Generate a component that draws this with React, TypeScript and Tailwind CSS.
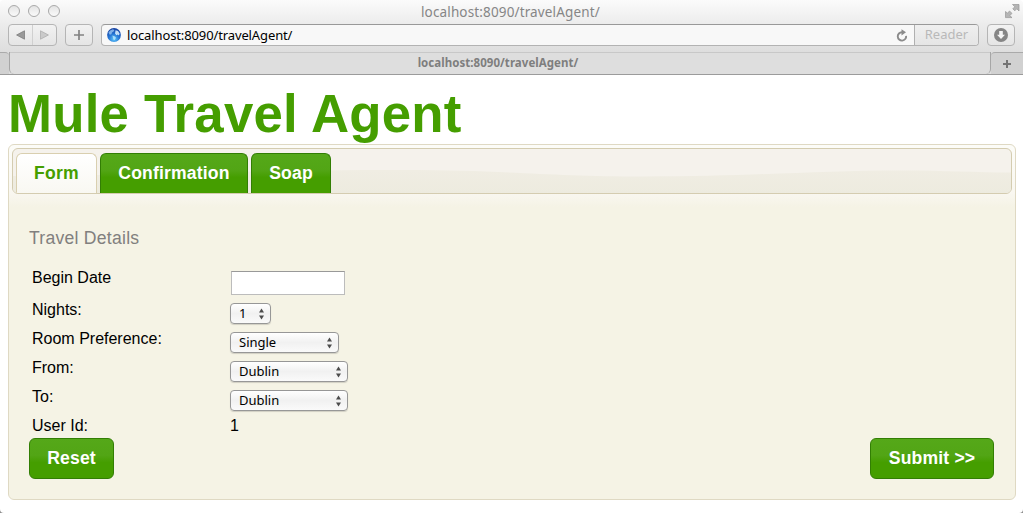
import React from "react";

function Steppers() {
  return (
    <svg width="7" height="12" viewBox="0 0 7 12" className="shrink-0" fill="#4b4b4b">
      <path d="M3.5 0.5 L6 4.5 H1 Z M3.5 11.5 L6 7.5 H1 Z" />
    </svg>
  );
}

function Select({ value, size }: { value: string; size: string }) {
  return (
    <button
      className={`flex h-[21px] items-center justify-between rounded-[4px] border border-[#979797] bg-linear-to-b from-white via-[#f1f1f1] to-[#fafafa] pr-[5px] pl-2 font-['Noto_Sans'] text-[13px] leading-[19px] text-black shadow-[0_1px_1px_rgba(0,0,0,0.15)] ${size}`}
    >
      <span>{value}</span>
      <Steppers />
    </button>
  );
}

function Row({ label, height, children }: { label: string; height: string; children: React.ReactNode }) {
  return (
    <div className={`flex items-start ${height}`}>
      <span className="w-[198px] shrink-0 text-[16px] leading-[18px]">{label}</span>
      {children}
    </div>
  );
}

const green =
  "border-[#327e04] bg-[linear-gradient(to_bottom,#55a819_0%,#52a515_42%,#459e00_60%,#459e00_100%)] font-bold text-[17.6px] tracking-[0.16px] text-white";

const chromeButton =
  "flex h-[22px] items-center rounded-[4px] border border-[#b5b5b5] bg-linear-to-b from-[#f2f2f2] to-[#e5e5e5]";

function Light() {
  return <span className="size-3 rounded-full border border-[#a9a9a9] bg-linear-to-b from-[#e4e4e4] to-[#fafafa]" />;
}

function Browser() {
  return (
    <header className="flex h-[75px] flex-col overflow-hidden rounded-t-[4px] border-b border-[#9b9b9b] bg-[linear-gradient(to_bottom,#fbfbfb_0px,#ececec_24px,#dedede_52px,#dedede_75px)] font-['Noto_Sans']">
      <div className="flex h-6 shrink-0 items-center pl-2">
        <div className="flex w-[200px] gap-2 pb-[2px]">
          <Light />
          <Light />
          <Light />
        </div>
        <div className="flex-1 pl-[213px] text-[13.5px] leading-[22px] whitespace-nowrap text-[#868686]">
          <span className="tracking-[0.14px]">localhost:8090/travelAgent/</span>
        </div>
        <svg width="16" height="16" viewBox="0 0 16 16" className="mr-[3px] mb-[2px]" fill="#b5b5b5" stroke="#969696" strokeWidth="0.7">
          <path d="M8.5 1.5 H15 V8 L12.8 5.8 L10.8 7.8 L8.8 5.8 L10.8 3.8 Z M1.5 8.5 L3.5 10.2 L5.5 8 L8 10.4 L5.8 12.6 L8 14.6 H1.5 Z" />
        </svg>
      </div>
      <div className="flex h-7 shrink-0 items-start pr-2 pl-2">
        <div className={`${chromeButton} w-[49px]`}>
          <span className="flex h-full w-[24px] items-center justify-center border-r border-[#d0d0d0]">
            <svg width="9" height="10" viewBox="0 0 9 10" fill="#999999" stroke="#7d7d7d" strokeWidth="0.8"><path d="M0.6 5 L8.5 0.8 V9.2 Z" /></svg>
          </span>
          <span className="flex flex-1 items-center justify-center">
            <svg width="9" height="10" viewBox="0 0 9 10" fill="#cacaca" stroke="#adadad" strokeWidth="0.8"><path d="M8.4 5 L0.5 0.8 V9.2 Z" /></svg>
          </span>
        </div>
        <div className={`${chromeButton} ml-2 w-7 justify-center`}>
          <svg width="10" height="10" viewBox="0 0 10 10" fill="none" stroke="#838383" strokeWidth="1.7"><path d="M0 5 H10 M5 0 V10" /></svg>
        </div>
        <div className="ml-2 flex h-[22px] flex-1 rounded-[4px] border border-[#b3b3b3] border-t-[#999] bg-[#f8f8f8]">
          <div className="flex flex-1 items-center pr-[6px] pl-[5px]">
            <svg width="14" height="14" viewBox="0 0 14 14">
              <defs>
                <radialGradient id="globe" cx="50%" cy="80%" r="80%">
                  <stop offset="0" stopColor="#5fc6fb" />
                  <stop offset="0.5" stopColor="#2272d2" />
                  <stop offset="1" stopColor="#173f9e" />
                </radialGradient>
              </defs>
              <circle cx="7" cy="7" r="6.9" fill="url(#globe)" />
              <path d="M1.4 4.6 Q2.8 1.8 5.8 1.2 L7.4 2 L6.6 3.6 L5 4.6 L4.4 6.2 L2.8 6.8 Z" fill="#a9d4fb" opacity="0.7" />
              <path d="M8.6 2.2 L11 3 L12.6 5.4 L12 7.4 L10.6 6.6 L9.4 7.2 L8 5.4 Z" fill="#e0f5ff" opacity="0.85" />
              <path d="M5.4 7.6 L8 8.4 L9 9.8 L7.6 12 L6.4 11.6 Z" fill="#c7efff" opacity="0.75" />
            </svg>
            <span className="ml-[6px] flex-1 text-[13px] leading-5 tracking-[-0.12px] text-black">localhost:8090/travelAgent/</span>
            <svg width="12" height="13" viewBox="0 0 12 13" fill="none" stroke="#8b8b8b" strokeWidth="1.9">
              <path d="M10.1 6.8 A4.2 4.2 0 1 1 6 3.2" />
              <path d="M5.5 0.2 L10 3.3 L5.5 6.4 Z" fill="#8b8b8b" stroke="none" />
            </svg>
          </div>
          <div className="flex w-16 items-center justify-center rounded-r-[3px] border-l border-[#b0b0b0] bg-linear-to-b from-[#efefef] to-[#e5e5e5] text-[13px] text-[#b9b9b9]">
            Reader
          </div>
        </div>
        <div className={`${chromeButton} ml-2 w-7 justify-center`}>
          <svg width="14" height="14" viewBox="0 0 14 14">
            <circle cx="7" cy="7" r="7" fill="#858585" />
            <path d="M5.2 3 H8.8 V6.8 H11 L7 11 L3 6.8 H5.2 Z" fill="#f4f4f4" />
          </svg>
        </div>
      </div>
      <div className="flex h-[22px] shrink-0">
        <div className="w-[9px] rounded-tr-[4px] border-t border-[#aaa] bg-[#d1d1d1]" />
        <div className="flex flex-1 rounded-b-[5px] border-x border-[#a6a6a6]">
          <div className="flex flex-1 items-center justify-center border-t border-[#c8c8c8] pr-1 pb-[1px] text-[11.5px] font-bold text-[#7e7e7e]">
            <span className="tracking-[0.04px]">localhost:8090/travelAgent/</span>
          </div>
        </div>
        <div className="flex w-[32px] items-center justify-center rounded-tl-[4px] border-t border-[#aaa] bg-[#d1d1d1]">
          <svg width="8" height="8" viewBox="0 0 8 8" stroke="#747474" strokeWidth="2"><path d="M0 4 H8 M4 0 V8" /></svg>
        </div>
      </div>
    </header>
  );
}

export default function App() {
  return (
    <div className="bg-[#8d8d8d]">
      <div className="flex h-[513px] w-[1023px] flex-col overflow-hidden rounded-b-[4px] bg-white font-['Liberation_Sans',sans-serif] text-black">
        <Browser />
        <h1 className="h-[69px] shrink-0 pt-[9px] pl-2 text-[52.8px] leading-[60px] font-bold tracking-[0.22px] text-[#459e00]">Mule Travel Agent</h1>
        <main className="mr-[7px] ml-2 flex h-[356px] shrink-0 flex-col rounded-[6px] border border-[#dfd9c3] bg-[linear-gradient(to_bottom,#fcfcf8_0px,#f9f7f0_48px,#f5f3e5_62px,#f5f3e5_100%)] p-[3px]">
          <nav className="relative h-[46px] shrink-0 overflow-hidden rounded-[6px] border border-[#d4ccb0] bg-[#f5f2ec]">
            <svg className="absolute inset-0 size-full" viewBox="0 0 998 44" preserveAspectRatio="none">
              <defs>
                <linearGradient id="wave" x1="0" x2="0" y1="0" y2="1">
                  <stop offset="0" stopColor="#f0ede3" />
                  <stop offset="1" stopColor="#edebdf" />
                </linearGradient>
              </defs>
              <path d="M0 27 C110 27 220 21 390 21 C490 21 540 27.5 630 27.5 C740 27.5 800 21.5 890 21.5 C930 21.5 965 23.5 998 23.5 V44 H0 Z" fill="url(#wave)" />
            </svg>
            <div className="relative flex h-full gap-[3px] pt-1 pl-[3px] text-[17.6px] leading-[38px] font-bold">
              <a className="w-[81px] rounded-t-[6px] border border-b-0 border-[#d9cfaf] bg-linear-to-b from-white to-[#f9f8f2] text-center tracking-[0.2px] text-[#459e00]">Form</a>
              <a className={`w-[148px] rounded-t-[6px] border border-b-0 text-center ${green}`}>Confirmation</a>
              <a className={`w-[80px] rounded-t-[6px] border border-b-0 text-center ${green}`}>Soap</a>
            </div>
          </nav>
          <h2 className="mt-[33px] pl-[17px] text-[17.6px] leading-[22px] tracking-[0.25px] text-[#817f7e]">Travel Details</h2>
          <form className="mt-5 flex flex-1 flex-col pr-[18px] pl-5" onSubmit={(e) => e.preventDefault()}>
            <Row label="Begin Date" height="h-8">
              <input className="mt-[2px] ml-[1px] h-6 w-[114px] border border-[#bcbcbc] border-t-[#999] bg-white" />
            </Row>
            <Row label="Nights:" height="h-[29px]">
              <div className="pt-[2px]"><Select value="1" size="w-[41px]" /></div>
            </Row>
            <Row label="Room Preference:" height="h-[29px]">
              <div className="pt-[2px]"><Select value="Single" size="w-[109px]" /></div>
            </Row>
            <Row label="From:" height="h-[29px]">
              <div className="pt-[2px]"><Select value="Dublin" size="w-[118px]" /></div>
            </Row>
            <Row label="To:" height="h-[29px]">
              <div className="pt-[2px]"><Select value="Dublin" size="w-[118px]" /></div>
            </Row>
            <Row label="User Id:" height="h-[21px]">
              <span className="text-[16px] leading-[18px]">1</span>
            </Row>
            <div className="-ml-[3px] flex justify-between">
              <button className={`h-[41px] w-[85px] rounded-[6px] border ${green}`}>Reset</button>
              <button className={`h-[41px] w-[124px] rounded-[6px] border ${green}`}>Submit &gt;&gt;</button>
            </div>
          </form>
        </main>
      </div>
    </div>
  );
}
